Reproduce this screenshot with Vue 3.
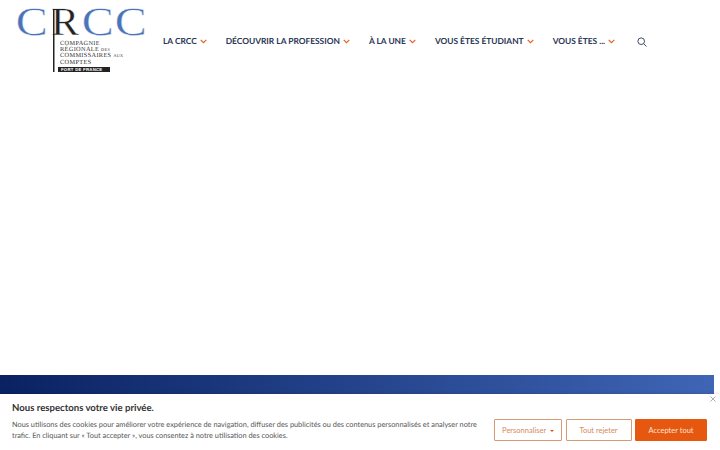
<template>
  <div class="page">
    <header class="site-header">
      <div class="logo">
        <svg width="133" height="78" viewBox="0 0 133 78">
          <text transform="translate(0.7 35) scale(1.2 1)" class="logo-big logo-blue">C</text>
          <text transform="translate(36 35) scale(1.05 1)" class="logo-big logo-dark">R</text>
          <text transform="translate(66.7 35) scale(1.2 1)" class="logo-big logo-blue">C</text>
          <text transform="translate(99.7 35) scale(1.2 1)" class="logo-big logo-blue">C</text>
          <rect x="38" y="9" width="1.5" height="63" fill="#222" />
          <text x="45" y="45" class="logo-small">COMPAGNIE</text>
          <text x="45" y="51.300" class="logo-small">RÉGIONALE <tspan class="logo-tiny">DES</tspan></text>
          <text x="45" y="57.300" class="logo-small">COMMISSAIRES <tspan class="logo-tiny">AUX</tspan></text>
          <text x="45" y="63.500" class="logo-small">COMPTES</text>
          <rect x="43" y="67" width="52" height="5" fill="#222" />
          <text x="46" y="71.200" class="logo-place">FORT DE FRANCE</text>
        </svg>
      </div>
      <nav class="main-nav">
        <a v-for="item in menu" :key="item" class="nav-link">
          {{ item }}
          <svg class="chevron" width="7" height="5" viewBox="0 0 7 5"><path d="M.7.9 3.500 3.700 6.300.9" /></svg>
        </a>
      </nav>
      <svg class="search" width="10" height="10" viewBox="0 0 10 10">
        <circle cx="4.200" cy="4.200" r="3.300" />
        <path d="M6.700 6.700 9.500 9.500" />
      </svg>
    </header>

    <div class="content"></div>
    <div class="banner"></div>

    <aside class="cookie-bar">
      <button class="cookie-close" aria-label="Fermer">
        <svg width="6" height="6" viewBox="0 0 6 6"><path d="M.5.5l5 5M5.500.5l-5 5" /></svg>
      </button>
      <div class="cookie-text">
        <h2>Nous respectons votre vie privée.</h2>
        <p>Nous utilisons des cookies pour améliorer votre expérience de navigation, diffuser des publicités ou des contenus personnalisés et analyser notre trafic. En cliquant sur « Tout accepter », vous consentez à notre utilisation des cookies.</p>
      </div>
      <div class="cookie-actions">
        <button class="btn btn-outline btn-custom">Personnaliser <span class="caret"></span></button>
        <button class="btn btn-outline btn-reject">Tout rejeter</button>
        <button class="btn btn-solid">Accepter tout</button>
      </div>
    </aside>
  </div>
</template>

<script setup>
const menu = ['LA CRCC', 'DÉCOUVRIR LA PROFESSION', 'À LA UNE', 'VOUS ÊTES ÉTUDIANT', 'VOUS ÊTES ...']
</script>

<style>
html, body {
  margin: 0;
  background: #fff;
  overflow: hidden;
}
</style>

<style scoped>
.page {
  position: relative;
  width: 720px;
  height: 450px;
  overflow: hidden;
  display: flex;
  flex-direction: column;
  font-family: "Lato", "Liberation Sans", sans-serif;
  text-rendering: geometricPrecision;
}

.site-header {
  display: flex;
  align-items: center;
  height: 82px;
  padding-left: 15px;
}

.logo {
  width: 148px;
  height: 78px;
  align-self: flex-start;
  flex: none;
}

.logo-big {
  font: 40px "Liberation Serif", serif;
  stroke: #fff;
  stroke-width: 0.4px;
}

.logo-blue {
  fill: #4a74b8;
}

.logo-dark {
  fill: #222;
}

.logo-small {
  font: 6.300px "Liberation Serif", serif;
  letter-spacing: 0.35px;
  fill: #333;
}

.logo-tiny {
  font-size: 4.200px;
}

.logo-place {
  font: bold 4.300px "Liberation Sans", sans-serif;
  letter-spacing: 0.25px;
  fill: #fff;
}

.main-nav {
  display: flex;
  gap: 19px;
}

.nav-link {
  display: flex;
  align-items: center;
  gap: 3px;
  font-size: 8.400px;
  font-weight: 700;
  color: #2a3755;
  white-space: nowrap;
}

.chevron path {
  fill: none;
  stroke: #e2601f;
  stroke-width: 1.2;
}

.search {
  margin-left: 22px;
  margin-top: 1px;
}

.search circle,
.search path {
  fill: none;
  stroke: #2a3755;
  stroke-width: 0.9;
}

.content {
  flex: none;
  height: 293px;
}

.banner {
  flex: none;
  width: 714px;
  height: 19px;
  background: linear-gradient(90deg, #0a2262 0%, #3f65b5 100%);
}

.cookie-bar {
  position: absolute;
  left: 0;
  right: 0;
  bottom: 0;
  height: 56px;
  box-sizing: border-box;
  display: flex;
  align-items: flex-end;
  justify-content: space-between;
  padding: 0 13px 9px 12px;
  background: #fff;
  box-shadow: 0 -1px 3px rgba(0, 0, 0, 0.1);
}

.cookie-close {
  position: absolute;
  top: 2px;
  right: 4px;
  padding: 0;
  border: 0;
  background: none;
  line-height: 0;
}

.cookie-close path {
  stroke: #999;
  stroke-width: 0.8;
}

.cookie-text {
  width: 470px;
}

.cookie-text h2 {
  margin: 0 0 4px;
  font-size: 9.600px;
  line-height: 12px;
  font-weight: 700;
  color: #333;
}

.cookie-text p {
  margin: 0;
  font-size: 7.360px;
  line-height: 11px;
  color: #555;
}

.cookie-actions {
  display: flex;
  gap: 3.500px;
}

.btn {
  height: 22px;
  box-sizing: border-box;
  padding: 0;
  border-radius: 1px;
  font-family: inherit;
  font-size: 7.500px;
}

.btn-outline {
  border: 1.500px solid #d99a73;
  background: #fff;
  color: #d58a5e;
}

.btn-custom {
  width: 68px;
}

.btn-reject {
  width: 66px;
}

.btn-solid {
  width: 72px;
  border: 1px solid #e6570f;
  background: #e6570f;
  color: #fbe3d6;
}

.caret {
  display: inline-block;
  margin-left: 2px;
  vertical-align: 1px;
  border: 2.500px solid transparent;
  border-top-color: #e6570f;
  border-bottom: 0;
}
</style>
